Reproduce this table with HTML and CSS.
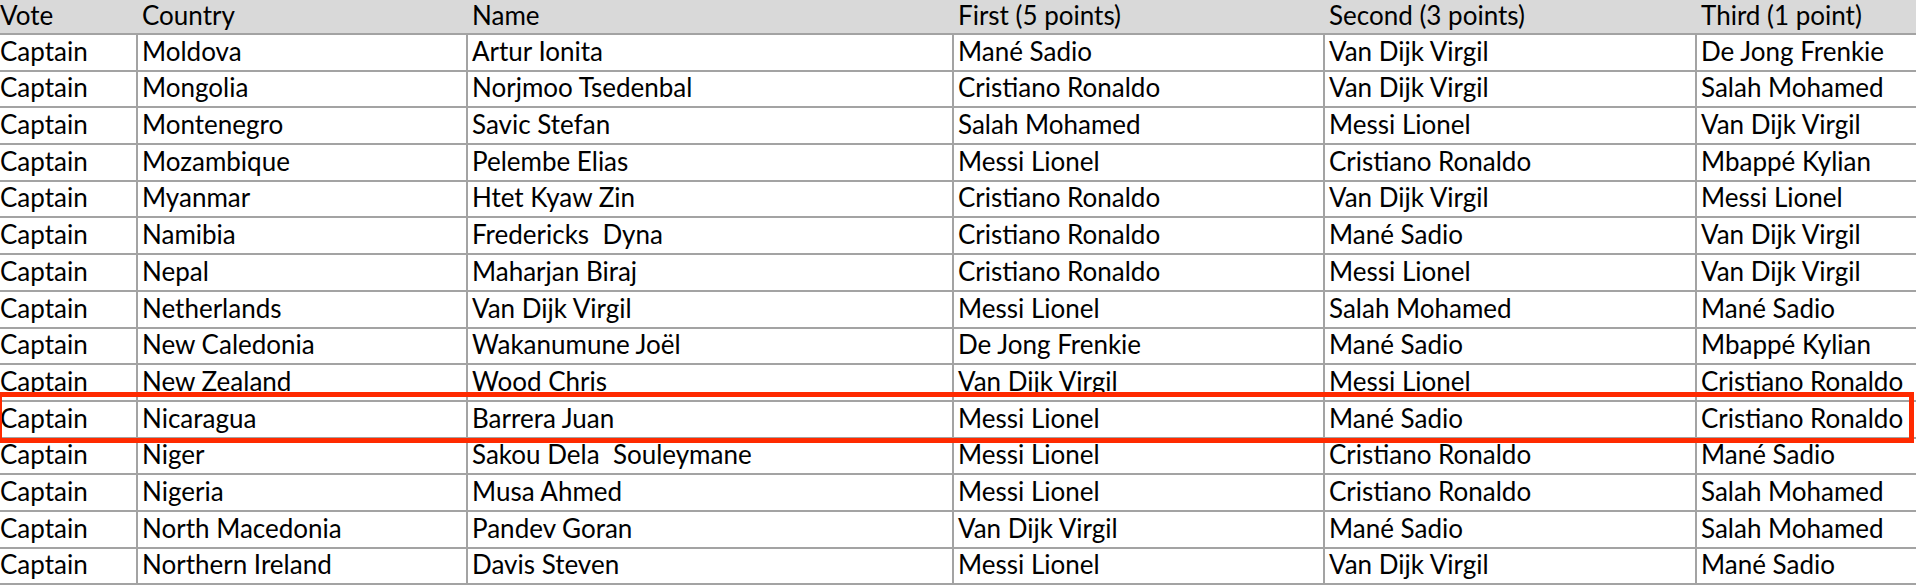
FILE: index.html
```html
<!DOCTYPE html>
<html>
<head>
<meta charset="utf-8">
<link rel="stylesheet" href="styles.css">
</head>
<body>
<div class="sheet">
  <div class="row head">
    <div class="cell">Vote</div><div class="cell">Country</div><div class="cell">Name</div><div class="cell">First (5 points)</div><div class="cell">Second (3 points)</div><div class="cell">Third (1 point)</div>
  </div>
  <div class="row"><div class="cell">Captain</div><div class="cell">Moldova</div><div class="cell">Artur Ionita</div><div class="cell">Mané Sadio</div><div class="cell">Van Dijk Virgil</div><div class="cell">De Jong Frenkie</div></div>
  <div class="row"><div class="cell">Captain</div><div class="cell">Mongolia</div><div class="cell">Norjmoo Tsedenbal</div><div class="cell">Cristiano Ronaldo</div><div class="cell">Van Dijk Virgil</div><div class="cell">Salah Mohamed</div></div>
  <div class="row"><div class="cell">Captain</div><div class="cell">Montenegro</div><div class="cell">Savic Stefan</div><div class="cell">Salah Mohamed</div><div class="cell">Messi Lionel</div><div class="cell">Van Dijk Virgil</div></div>
  <div class="row"><div class="cell">Captain</div><div class="cell">Mozambique</div><div class="cell">Pelembe Elias</div><div class="cell">Messi Lionel</div><div class="cell">Cristiano Ronaldo</div><div class="cell">Mbappé Kylian</div></div>
  <div class="row"><div class="cell">Captain</div><div class="cell">Myanmar</div><div class="cell">Htet Kyaw Zin</div><div class="cell">Cristiano Ronaldo</div><div class="cell">Van Dijk Virgil</div><div class="cell">Messi Lionel</div></div>
  <div class="row"><div class="cell">Captain</div><div class="cell">Namibia</div><div class="cell">Fredericks  Dyna</div><div class="cell">Cristiano Ronaldo</div><div class="cell">Mané Sadio</div><div class="cell">Van Dijk Virgil</div></div>
  <div class="row"><div class="cell">Captain</div><div class="cell">Nepal</div><div class="cell">Maharjan Biraj</div><div class="cell">Cristiano Ronaldo</div><div class="cell">Messi Lionel</div><div class="cell">Van Dijk Virgil</div></div>
  <div class="row"><div class="cell">Captain</div><div class="cell">Netherlands</div><div class="cell">Van Dijk Virgil</div><div class="cell">Messi Lionel</div><div class="cell">Salah Mohamed</div><div class="cell">Mané Sadio</div></div>
  <div class="row"><div class="cell">Captain</div><div class="cell">New Caledonia</div><div class="cell">Wakanumune Joël</div><div class="cell">De Jong Frenkie</div><div class="cell">Mané Sadio</div><div class="cell">Mbappé Kylian</div></div>
  <div class="row"><div class="cell">Captain</div><div class="cell">New Zealand</div><div class="cell">Wood Chris</div><div class="cell">Van Dijk Virgil</div><div class="cell">Messi Lionel</div><div class="cell">Cristiano Ronaldo</div></div>
  <div class="row marked"><div class="cell">Captain</div><div class="cell">Nicaragua</div><div class="cell">Barrera Juan</div><div class="cell">Messi Lionel</div><div class="cell">Mané Sadio</div><div class="cell">Cristiano Ronaldo</div></div>
  <div class="row"><div class="cell">Captain</div><div class="cell">Niger</div><div class="cell">Sakou Dela  Souleymane</div><div class="cell">Messi Lionel</div><div class="cell">Cristiano Ronaldo</div><div class="cell">Mané Sadio</div></div>
  <div class="row"><div class="cell">Captain</div><div class="cell">Nigeria</div><div class="cell">Musa Ahmed</div><div class="cell">Messi Lionel</div><div class="cell">Cristiano Ronaldo</div><div class="cell">Salah Mohamed</div></div>
  <div class="row"><div class="cell">Captain</div><div class="cell">North Macedonia</div><div class="cell">Pandev Goran</div><div class="cell">Van Dijk Virgil</div><div class="cell">Mané Sadio</div><div class="cell">Salah Mohamed</div></div>
  <div class="row"><div class="cell">Captain</div><div class="cell">Northern Ireland</div><div class="cell">Davis Steven</div><div class="cell">Messi Lionel</div><div class="cell">Van Dijk Virgil</div><div class="cell">Mané Sadio</div></div>
</div>
</body>
</html>
```

FILE: styles.css
```css
html, body {
  margin: 0;
  padding: 0;
  background: #ffffff;
  overflow: hidden;
}

.sheet {
  margin-left: -4px;
  width: 2000px;
  font-family: Lato, "Liberation Sans", sans-serif;
  font-size: 26px;
  color: #000000;
}

.row {
  display: grid;
  grid-template-columns: 142px 330px 486px 371px 372px 299px;
  height: 36.7px;
  box-sizing: border-box;
  border-bottom: 2px solid #a3a3a3;
}

.row.head {
  height: 35px;
  background: #d9d9d9;
}

.cell {
  box-sizing: border-box;
  border-right: 2px solid #a3a3a3;
  padding: 0 0 6px 4px;
  display: flex;
  align-items: flex-end;
  white-space: pre;
  line-height: 1;
  overflow: hidden;
}

.head .cell {
  border-right: none;
  padding-bottom: 5px;
}

.marked {
  position: relative;
}

.marked::after {
  content: "";
  position: absolute;
  left: 1px;
  right: 82px;
  top: -10px;
  bottom: -6px;
  border: 5px solid #ff2a00;
  pointer-events: none;
}
```
